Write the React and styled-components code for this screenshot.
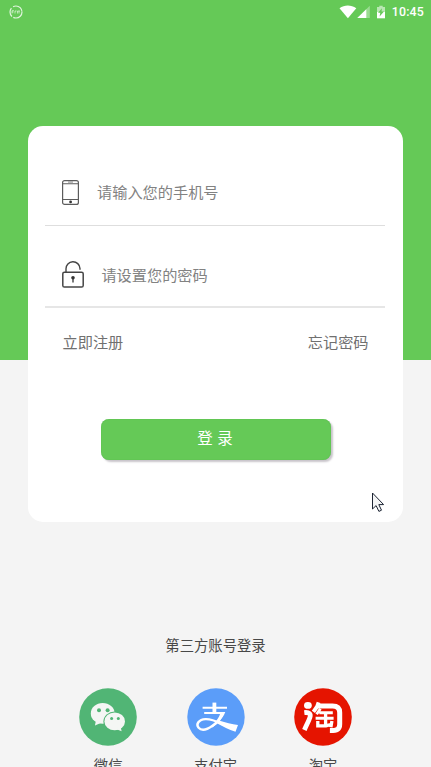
import React from "react";
import styled, { createGlobalStyle } from "styled-components";

const GlobalStyle = createGlobalStyle`
  html, body { margin: 0; height: 767px; overflow: hidden; background: #f4f4f4; }
  * { box-sizing: border-box; }
`;

const Screen = styled.main`
  height: 767px;
  overflow: hidden;
  display: flex;
  flex-direction: column;
  background: linear-gradient(#65c957 0 360px, #f4f4f4 360px);
  font-family: Roboto, "Noto Sans CJK SC", sans-serif;
`;

const StatusBar = styled.header`
  height: 24px;
  flex: none;
  display: flex;
  align-items: center;
  padding: 0 7px 1px 9px;
  color: #fff;
  font-size: 12.3px;
  font-weight: 500;
  letter-spacing: 0.2px;
`;

const StatusIcons = styled.svg`
  margin-left: auto;
  margin-right: 5px;
`;

const Card = styled.section`
  width: 375px;
  height: 396px;
  flex: none;
  margin: 102px 0 0 28px;
  padding: 19px 18px 0 17px;
  border-radius: 15px;
  background: #fff;
`;

const Field = styled.label`
  height: ${(p) => p.$height}px;
  display: flex;
  align-items: center;
  gap: ${(p) => p.$gap}px;
  padding: ${(p) => p.$top}px 0 0 17px;
  border-bottom: ${(p) => p.$line}px solid ${(p) => p.$color};
  svg { flex: none; }
`;

const Input = styled.input`
  flex: 1;
  min-width: 0;
  height: 24px;
  padding: 0 0 ${(p) => p.$lift}px;
  border: 0;
  outline: 0;
  background: transparent;
  font: 15.2px "Noto Sans CJK SC", sans-serif;
  &::placeholder { color: #828282; opacity: 1; }
`;

const Links = styled.nav`
  display: flex;
  justify-content: space-between;
  padding: 24px 16.5px 0 17.5px;
`;

const TextLink = styled.a`
  color: #707070;
  font-size: 15.2px;
  line-height: 22px;
`;

const LoginButton = styled.button`
  display: block;
  width: 230px;
  height: 41px;
  margin: 65px 0 0 56px;
  padding: 0 2px 5px 0;
  border: 0;
  border-radius: 8px;
  background: #65c957;
  box-shadow: inset 0 0 1px #48aa40, 2px 2px 2px #c9c5cb;
  color: #fff;
  font: 15.5px "Noto Sans CJK SC", sans-serif;
  white-space: pre;
  word-spacing: 1px;
`;

const ThirdParty = styled.section`
  flex: none;
  padding-top: 113px;
`;

const Heading = styled.h2`
  margin: 0;
  font-size: 14.35px;
  font-weight: 400;
  line-height: 24px;
  color: #484848;
  text-align: center;
`;

const Providers = styled.div`
  display: grid;
  grid-template-columns: repeat(3, 107.4px);
  padding: 29px 0 0 54.5px;
`;

const Provider = styled.div`
  display: flex;
  flex-direction: column;
  align-items: center;
  gap: 10px;
  font-size: 14.35px;
  line-height: 22px;
  color: #484848;
`;

const Pointer = styled.svg`
  position: absolute;
  left: 371px;
  top: 492px;
`;

const AppMark = () => (
  <svg width="14" height="14" viewBox="0 0 14 14" fill="none" stroke="#fff">
    <circle cx="7" cy="7" r="6" strokeWidth="1.2" strokeOpacity=".8" strokeDasharray="12 1.5 9 2" />
    <path d="M3 8.5V5.7h2M3 7h1.5M6 8.5V6h1.5M8.5 6v2.5M8.5 6H11M10 6v2.5" strokeWidth=".8" strokeOpacity=".7" />
  </svg>
);

const PhoneIcon = () => (
  <svg width="17" height="25" viewBox="0 0 17 25" fill="none" stroke="#5c5c5c">
    <rect x=".6" y=".6" width="15.8" height="23.8" rx="2" strokeWidth="1.2" />
    <path d="M1 3.8h15M1 19.5h15" strokeWidth="1.1" />
    <path d="M6 2.1h5" strokeWidth="1" strokeOpacity=".7" />
    <circle cx="8.6" cy="21.9" r="1.4" fill="#333" stroke="none" />
  </svg>
);

const LockIcon = () => (
  <svg width="22" height="27" viewBox="0 0 22 27" fill="none" stroke="#454545">
    <rect x=".8" y="11.2" width="20.4" height="14.8" rx="1.6" strokeWidth="1.5" />
    <path d="M4 11V8a7 7 0 0 1 14-.5v1.2" strokeWidth="1.4" />
    <circle cx="11" cy="16.8" r="1.8" fill="#333" stroke="none" />
    <path d="M11 17v4.5" stroke="#333" strokeWidth="1.3" />
  </svg>
);

const WechatLogo = () => (
  <svg width="58" height="58" viewBox="0 0 58 58">
    <circle cx="29" cy="29" r="28.8" fill="#51b575" />
    <g fill="#f4f6f4">
      <ellipse cx="23.7" cy="25.4" rx="11.9" ry="10.4" />
      <path d="m17 32-1 5.6 6.3-2.8z" />
    </g>
    <ellipse cx="35.7" cy="33.4" rx="11.3" ry="9.9" fill="#51b575" />
    <g fill="#f4f6f4">
      <ellipse cx="35.7" cy="33.4" rx="10.3" ry="8.9" />
      <path d="m37 41 5.6 2.2L41.5 38z" />
    </g>
    <g fill="#51b575">
      <circle cx="20" cy="22.2" r="2" /><circle cx="28.6" cy="22.2" r="2" />
      <circle cx="32.6" cy="30.5" r="1.5" /><circle cx="39.3" cy="30.5" r="1.5" />
    </g>
  </svg>
);

const AlipayLogo = () => (
  <svg width="58" height="58" viewBox="0 0 58 58">
    <circle cx="29" cy="29" r="28.7" fill="#5b9df9" />
    <g fill="none" stroke="#fff">
      <path d="M27.4 14.6v10" strokeWidth="3.8" />
      <path d="M15.6 19.7H40M17.2 25h18" strokeWidth="2.1" />
      <path d="M36 24.8c-2.2 6-6 10-10.5 13-5 3.6-10.8 5.4-13.9 2-3-3.4 0-8.3 6.9-8.7 6-.3 11 2.2 17 5" strokeWidth="2.4" />
    </g>
    <path fill="#fff" d="M33.8 24h4.5c-1.3 3.7-3.3 6.2-5.5 8.7 5.5 1.8 12 3.3 18.2 4.2l-2.5 6.8c-7-2.5-12.3-5.2-18.1-8.3l-5 4-1-1.5c4.4-3.6 7.7-8 9.4-13.9z" />
  </svg>
);

const TaobaoLogo = () => (
  <svg width="58" height="58" viewBox="0 0 58 58">
    <circle cx="29" cy="29" r="28.8" fill="#e51400" />
    <ellipse cx="13.9" cy="17.4" rx="3.9" ry="3.4" fill="#fff" />
    <g fill="none" stroke="#fff">
      <path d="M10.3 24.6c5-.6 6.8 1.5 5.6 4.9-1.1 3.2-3.3 7.5-5.5 12.4" strokeWidth="4.8" />
      <path d="m24.6 14.4-1.4 4.1-3.8 5.3" strokeWidth="3.9" />
      <path d="M23 17.9h15.5c4.8 0 7.2 2.3 7.2 6.5v11.9c0 4.9-2.6 6.4-9.8 6.3" strokeWidth="5" />
      <path d="m26.4 20.7-3.8 5.5M25.3 24.8h13.5M21.6 30.2h18" strokeWidth="2.9" />
      <path d="M31.6 24v13.2M23.8 33v4.8h8.1l4.5-1.2M37.9 33l-1 6.2" strokeWidth="3.3" />
    </g>
  </svg>
);

export default function App() {
  return (
    <Screen>
      <GlobalStyle />
      <StatusBar>
        <AppMark />
        <StatusIcons width="48" height="14" viewBox="0 0 48 14" fill="#fff">
          <path d="M.5 3.2C5.5-.3 12-.3 17.3 3.2L8.9 13.2z" />
          <path fillOpacity=".35" d="M18.3 13 30.8.8V13z" />
          <path d="M18.3 13 27.3 4.2V13z" />
          <path fillOpacity=".55" d="M40.3.7h3.4V2H46v5h-8V2h2.3z" />
          <path d="M38 7h8v6.3h-8z" />
          <path fill="#65c957" d="m43 3.2-4 4.5h2.3l-.7 3.7L45 6.6h-2.5z" />
        </StatusIcons>
        10:45
      </StatusBar>
      <Card>
        <Field $height={81} $top={15} $gap={18} $line={1} $color="#dedede">
          <PhoneIcon />
          <Input $lift={3} placeholder="请输入您的手机号" />
        </Field>
        <Field $height={82} $top={17} $gap={17.4} $line={2} $color="#e6e6e6">
          <LockIcon />
          <Input $lift={2} type="password" placeholder="请设置您的密码" />
        </Field>
        <Links>
          <TextLink>立即注册</TextLink>
          <TextLink>忘记密码</TextLink>
        </Links>
        <LoginButton>登 录</LoginButton>
      </Card>
      <ThirdParty>
        <Heading>第三方账号登录</Heading>
        <Providers>
          <Provider><WechatLogo />微信</Provider>
          <Provider><AlipayLogo />支付宝</Provider>
          <Provider><TaobaoLogo />淘宝</Provider>
        </Providers>
      </ThirdParty>
      <Pointer width="14" height="22" viewBox="0 0 14 22">
        <path d="M1.5 1v16l3.6-3.4 2.8 5.8 2.6-1.2-2.7-5.6h4.8z" fill="#f4f5f6" stroke="#1c2433" strokeWidth="1" />
      </Pointer>
    </Screen>
  );
}
